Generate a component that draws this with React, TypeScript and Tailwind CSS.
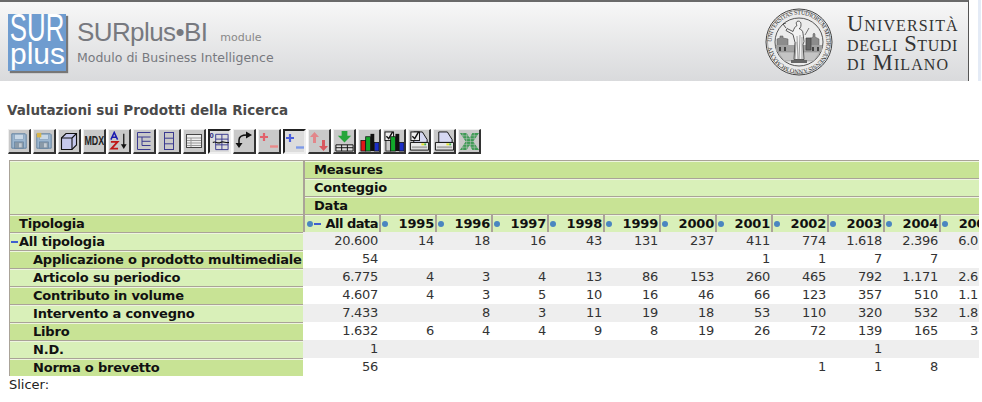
const sans = "font-['DejaVu_Sans',Verdana,sans-serif]";

const years = ["1995", "1996", "1997", "1998", "1999", "2000", "2001", "2002", "2003", "2004", "2005"];

const rows = [
  { label: "All tipologia", top: true, values: ["20.600", "14", "18", "16", "43", "131", "237", "411", "774", "1.618", "2.396", "6.012"] },
  { label: "Applicazione o prodotto multimediale", values: ["54", "", "", "", "", "", "", "1", "1", "7", "7", ""] },
  { label: "Articolo su periodico", values: ["6.775", "4", "3", "4", "13", "86", "153", "260", "465", "792", "1.171", "2.618"] },
  { label: "Contributo in volume", values: ["4.607", "4", "3", "5", "10", "16", "46", "66", "123", "357", "510", "1.112"] },
  { label: "Intervento a convegno", values: ["7.433", "", "8", "3", "11", "19", "18", "53", "110", "320", "532", "1.814"] },
  { label: "Libro", values: ["1.632", "6", "4", "4", "9", "8", "19", "26", "72", "139", "165", "318"] },
  { label: "N.D.", values: ["1", "", "", "", "", "", "", "", "", "1", "", ""] },
  { label: "Norma o brevetto", values: ["56", "", "", "", "", "", "", "", "1", "1", "8", ""] },
];

function Dot() {
  return <span className="inline-block size-[6px] rounded-full bg-[#4a86c0] shrink-0" />;
}

function Minus() {
  return <span className="inline-block w-[7px] h-[2px] bg-[#3f5fd0] shrink-0" />;
}

function Floppy({ badge }: { badge?: boolean }) {
  return (
    <svg viewBox="0 0 20 20" className="size-[18px]">
      <path d="M2 2h15l1 1v15H2z" fill="#9db7cf" stroke="#5f7f9f" />
      <rect x="5" y="2.500" width="10" height="6" fill="#c9d8e6" stroke="#7f9ab5" strokeWidth="0.7" />
      <rect x="5" y="11" width="10" height="7" fill="#8a9aa8" stroke="#5f7f9f" strokeWidth="0.7" />
      <rect x="10" y="12.500" width="3" height="4.500" fill="#c4ccd4" />
      {badge && <rect x="2" y="1" width="5" height="5" fill="#d9b54a" />}
    </svg>
  );
}

function Icon({ name }: { name: string }) {
  const common = "size-[20px] shrink-0";
  switch (name) {
    case "save":
      return <Floppy />;
    case "saveas":
      return <Floppy badge />;
    case "cube":
      return (
        <svg viewBox="0 0 20 20" className={common}>
          <path d="M2.500 7 7 2.500h10.500V14L13 18.500H2.500z" fill="#c5c8ec" stroke="#111" strokeWidth="1.100" />
          <path d="M2.500 7H13v11.500M13 7l4.500-4.500" fill="none" stroke="#111" strokeWidth="1.100" />
        </svg>
      );
    case "mdx":
      return <span className="shrink-0 font-['Liberation_Sans',sans-serif] font-bold text-[12px] scale-x-[.74] text-[#222]">MDX</span>;
    case "sort":
      return (
        <svg viewBox="0 0 21 21" className={common}>
          <path d="M2 9 5.500 1.500 9 9M3.500 6.500h4" fill="none" stroke="#1a1ab0" strokeWidth="1.600" />
          <path d="M2 11.500h7L2.500 18.500H9.500" fill="none" stroke="#c01818" strokeWidth="1.900" />
          <path d="M15.500 3v13" stroke="#111" strokeWidth="1.300" />
          <path d="M12.500 14h6l-3 5z" fill="#111" />
        </svg>
      );
    case "tree":
      return (
        <svg viewBox="0 0 20 20" className={common} fill="none" stroke="#3a3a90" strokeWidth="1">
          <path d="M3.500 1.500h13M3.500 1.500v17h13M3.500 6h13M8 6v8.500h8.500M8 10.300h8.500" />
        </svg>
      );
    case "rows":
      return (
        <svg viewBox="0 0 20 20" className={common} fill="none" stroke="#3a3a90" strokeWidth="1">
          <rect x="5.500" y="1.500" width="9" height="17" />
          <path d="M5.500 7.200h9M5.500 12.800h9" />
        </svg>
      );
    case "table":
      return (
        <svg viewBox="0 0 20 20" className={common}>
          <rect x="2.500" y="3.500" width="15" height="13" fill="#eee" stroke="#444" />
          <path d="M3 7h14M3 9.500h14M3 12h14M3 14.500h14M7 7v9" stroke="#999" fill="none" />
        </svg>
      );
    case "zero":
      return (
        <svg viewBox="0 0 22 22" className="size-[21px] shrink-0">
          <path d="M7 3.500h13v16H7zM7 8.500h13M7 14.500h13M13.500 3.500v16" fill="none" stroke="#3a3a90" strokeWidth="1" />
          <path d="M4 12c3-2 5 2 8 0s5 1 9 0" fill="none" stroke="#111" strokeWidth="1.200" />
          <text x="0.500" y="7" fontSize="8" fontWeight="700" fill="#2a2a80" fontFamily="Liberation Sans">0</text>
        </svg>
      );
    case "swap":
      return (
        <svg viewBox="0 0 20 20" className={common}>
          <path d="M5 14V9c0-3 3-5 8-5" fill="none" stroke="#111" strokeWidth="1.500" />
          <path d="M12 0.500 18 4l-6 3.500zM1.500 12h7L5 17z" fill="#111" />
        </svg>
      );
    case "redplus":
    case "blueplus": {
      const c = name === "redplus" ? "#e2606a" : "#4b5fdc";
      const d = name === "redplus" ? "#e88a8a" : "#7d9ae8";
      return (
        <svg viewBox="0 0 20 20" className={common}>
          <path d="M1 6h8M5 2v8" stroke={c} strokeWidth="2.200" />
          <path d="M11 15.500h8" stroke={d} strokeWidth="2.400" />
        </svg>
      );
    }
    case "updown":
      return (
        <svg viewBox="0 0 20 20" className={common}>
          <path d="M5.500 1 10 6H7v6H4V6H1z" fill="#e2868a" />
          <path d="M13 9h3v6h3l-4.500 5L10 15h3z" fill="#d8585f" />
        </svg>
      );
    case "export":
      return (
        <svg viewBox="0 0 22 22" className="size-[21px] shrink-0">
          <path d="M8 0h6v5h4l-7 7-7-7h4z" fill="#26a53a" />
          <path d="M2 14.500h18v6.500H2zM2 17.500h18M8 14.500v6.500M14 14.500v6.500" fill="#ddd" stroke="#111" strokeWidth="1" />
        </svg>
      );
    case "chart":
    case "chartcfg":
      return (
        <svg viewBox="0 0 22 22" className="size-[21px] shrink-0">
          {name === "chartcfg" && (
            <>
              <rect x="1" y="1" width="9" height="9" fill="#eee" stroke="#111" />
              <path d="M2.500 5.500 5 8l4-7" fill="none" stroke="#111" strokeWidth="1.500" />
            </>
          )}
          <rect x="2" y="10" width="5" height="11" fill={name === "chart" ? "#e01818" : "#c9c9c9"} stroke="#111" strokeWidth="0.800" />
          <rect x="7" y="6" width="5" height="15" fill="#12a82a" stroke="#111" strokeWidth="0.800" />
          <rect x="12" y="3" width="4" height="18" fill="#111" />
          <rect x="16" y="12" width="5" height="9" fill="#1c2fc8" stroke="#111" strokeWidth="0.800" />
        </svg>
      );
    case "printcfg":
    case "print":
      return (
        <svg viewBox="0 0 22 22" className="size-[21px] shrink-0">
          <path d="M5 1h9l5 8v3H5z" fill="#d6d8f2" stroke="#111" />
          <path d="M1.500 12h19v8h-19z" fill="#e8e8e8" stroke="#111" />
          <rect x="3" y="16" width="16" height="2" fill="#a8a8a8" />
          <rect x="13" y="13" width="3" height="2" fill="#e4e02a" />
          <rect x="16" y="13" width="2" height="2" fill="#3fb04a" />
          {name === "printcfg" && (
            <>
              <rect x="2" y="1" width="9" height="9" fill="#eee" stroke="#111" />
              <path d="M3.500 5.500 6 8l4-7" fill="none" stroke="#111" strokeWidth="1.500" />
            </>
          )}
        </svg>
      );
    default:
      return (
        <svg viewBox="0 0 22 22" className="size-[21px] shrink-0">
          <path d="M1 2h7l3 5 3-5h7l-6 9 6 9h-7l-3-5-3 5H1l6-9z" fill="#3f9a55" />
          <path d="M1 5h20M1 8h20M1 11h20M1 14h20M1 17h20M4 2v18M8 2v18M12 2v18M16 2v18" stroke="#c9c9c9" strokeWidth="0.500" />
        </svg>
      );
  }
}

const tools = ["save", "saveas", "cube", "mdx", "sort", "tree", "rows", "table", "zero", "swap", "redplus", "blueplus", "updown", "export", "chart", "chartcfg", "printcfg", "print", "excel"];
const pressed = ["zero", "blueplus"];

function Seal() {
  return (
    <svg viewBox="0 0 68 68" className="size-[68px] shrink-0">
      <defs>
        <path id="ring" d="M6.500 34a27.500 27.500 0 1 1 55 0a27.500 27.500 0 1 1-55 0" />
      </defs>
      <circle cx="34" cy="34" r="33" fill="#ebebeb" stroke="#444" strokeWidth="1" />
      <circle cx="34" cy="34" r="31.500" fill="none" stroke="#777" strokeWidth="0.600" />
      <circle cx="34" cy="34" r="24" fill="#ececec" stroke="#444" strokeWidth="0.900" />
      <text fontSize="6.200" fill="#333" fontFamily="Liberation Serif" textLength="168">
        <textPath href="#ring">UNIVERSITAS STUDIORUM MEDIOLANENSIS ANNO MCMXXIV</textPath>
      </text>
      <path d="M11 37h46v7H11z" fill="#a2a2a2" />
      <path d="M12 37v-6l3-1v-2h3v2l5 1v6M44 37v-6l4-2v-3l1-1 1 1v3l4 2v6" fill="#8c8c8c" stroke="#555" strokeWidth="0.500" />
      <path d="M14 39h2v4h-2zM19 39h2v4h-2zM47 39h2v4h-2zM52 39h2v4h-2z" fill="#444" />
      <path d="M13 44h42l-6 9H19z" fill="#c4c4c4" stroke="#777" strokeWidth="0.400" />
      <path d="M32 13.500c2-1 4 0 4 3s-1 4-2 4c2 1 4 2 4 5l1 8-1 3 1 15H29l1-17-2-8-7-4 1-2 6 3c1-3 2-5 4-6-1-2-1-3 0-4z" fill="#f2f2f2" stroke="#333" strokeWidth="0.800" />
      <path d="M32 28l1 24M35 27l-1 25M37 29l0 23M31 34l-1 18" fill="none" stroke="#666" strokeWidth="0.600" />
      <path d="M40 27l4-7M41 30h5v12h-5z" fill="#666" stroke="#444" strokeWidth="0.700" />
      <path d="M21 20l-3-4M18 16l3-1" fill="none" stroke="#333" strokeWidth="0.800" />
      <path d="M26 52h16v3H26z" fill="#666" />
    </svg>
  );
}

function Header() {
  return (
    <div className="flex items-start">
      <header className="w-[969px] h-[81px] flex items-center border-t-2 border-t-[#6a6a6a] border-r border-r-[#555] bg-gradient-to-b from-[#f7f7f7] to-[#d9dadc]">
        <div className="relative ml-2 w-[58px] h-[57px] mt-[2px] bg-[#6f9ccf] shadow-[2px_2px_1px_#777] overflow-hidden shrink-0 text-white font-['Liberation_Sans',sans-serif]">
          <span className="absolute left-[-11px] top-[-5px] text-[38px] leading-[38px] scale-x-[.68]">SUR</span>
          <span className="absolute left-[2px] top-[25px] text-[30px] leading-[30px]">plus</span>
        </div>
        <div className={`ml-[11px] text-[#77797f] ${sans}`}>
          <div className="flex items-baseline">
            <span className="text-[26px] leading-[32px] tracking-[-0.6px] font-['Liberation_Sans',sans-serif]">SURplus•BI</span>
            <span className="ml-[13px] text-[11px] leading-[16px] text-[#888]">module</span>
          </div>
          <div className="text-[12.500px] leading-[18px] mt-[1px]">Modulo di Business Intelligence</div>
        </div>
        <div className="ml-auto flex items-center mr-[10px]">
          <Seal />
          <div className="ml-[14px] mt-[4px] w-[111px] font-['Liberation_Serif',serif] text-[#333] text-[22.500px] leading-[19.500px] [font-variant:small-caps] tracking-[1.1px] whitespace-nowrap">
            <div>Università</div>
            <div className="tracking-[0.6px]">degli Studi</div>
            <div>di Milano</div>
          </div>
        </div>
      </header>
      <div className="ml-[9px] w-[3px] h-[81px] bg-[#e4ebf6]" />
    </div>
  );
}

function Toolbar() {
  return (
    <div className="flex gap-[2px] ml-2 mt-[11px] h-[25px]">
      {tools.map((t) => (
        <div
          key={t}
          className={
            pressed.includes(t)
              ? "w-[23px] h-[25px] flex items-center justify-center overflow-hidden bg-[#dcdcdc] border-2 border-t-[#222] border-l-[#222] border-r-[#eee] border-b-[#eee]"
              : "w-[23px] h-[25px] flex items-center justify-center overflow-hidden bg-[#c9c9c9] border border-t-[#eee] border-l-[#eee] border-r-2 border-b-2 border-r-[#333] border-b-[#333]"
          }
        >
          <Icon name={t} />
        </div>
      ))}
    </div>
  );
}

function PivotTable() {
  const dark = "bg-[#c8e395]";
  const light = "bg-[#d9f0b9]";
  const line = "border-t border-[#aaa398] shadow-[inset_0_1px_0_#eef5e0]";
  const span = "h-[18px] p-0 font-bold text-left whitespace-nowrap tracking-[-0.2px]";
  return (
    <div className="ml-[9px] w-[970px] overflow-hidden mt-[6px]">
      <table className="table-fixed w-[986px] border-separate border-spacing-0 text-[13px] leading-[16px] text-[#111]">
        <colgroup>
          <col className="w-[294px]" />
          <col className="w-[76px]" />
          {years.map((y) => (
            <col key={y} className="w-[56px]" />
          ))}
        </colgroup>
        <thead>
          <tr>
            <th rowSpan={3} className={`${light} ${line} border-l`} />
            <th colSpan={12} className={`${span} ${dark} ${line} border-l-2 pl-[9px]`}>Measures</th>
          </tr>
          <tr>
            <th colSpan={12} className={`${span} ${light} ${line} border-l-2 pl-[9px]`}>Conteggio</th>
          </tr>
          <tr>
            <th colSpan={12} className={`${span} ${dark} ${line} border-l-2 pl-[9px]`}>Data</th>
          </tr>
          <tr>
            <th className={`${span} ${dark} ${line} border-l pl-[9px]`}>Tipologia</th>
            <th className={`${span} ${light} ${line} border-l-2`}>
              <div className="flex items-center gap-[1px] pl-[2px] pr-[1px]">
                <Dot />
                <Minus />
                <span className="ml-auto tracking-[-0.5px]">All data</span>
              </div>
            </th>
            {years.map((y) => (
              <th key={y} className={`${span} ${light} ${line} border-l-2`}>
                <div className="flex items-center pl-[1px] pr-[1px]">
                  <Dot />
                  <span className="ml-auto">{y}</span>
                </div>
              </th>
            ))}
          </tr>
        </thead>
        <tbody>
          {rows.map((r, i) => (
            <tr key={r.label} className={i % 2 === 0 ? "bg-[#eeeeee]" : "bg-white"}>
              <th className={`${span} ${line} border-l ${i % 2 === 0 ? light : dark} ${r.top ? "pl-[1px]" : "pl-[23px]"}`}>
                {r.top ? (
                  <div className="flex items-center gap-[1px]">
                    <Minus />
                    <span>{r.label}</span>
                  </div>
                ) : (
                  r.label
                )}
              </th>
              {r.values.map((v, j) => (
                <td key={j} className="h-[18px] p-0 pr-[1px] text-right font-normal text-[#333] tracking-[-0.27px] whitespace-nowrap">
                  {v}
                </td>
              ))}
            </tr>
          ))}
        </tbody>
      </table>
    </div>
  );
}

export default function App() {
  return (
    <main className={`w-[982px] h-[402px] bg-white overflow-hidden ${sans}`}>
      <Header />
      <h1 className="ml-[7px] mt-[21px] h-[16px] text-[13.500px] leading-[16px] font-bold text-[#4a4a4a]">Valutazioni sui Prodotti della Ricerca</h1>
      <Toolbar />
      <PivotTable />
      <div className="ml-[9px] mt-[1px] text-[13px] leading-[16px] text-[#222]">Slicer:</div>
    </main>
  );
}
